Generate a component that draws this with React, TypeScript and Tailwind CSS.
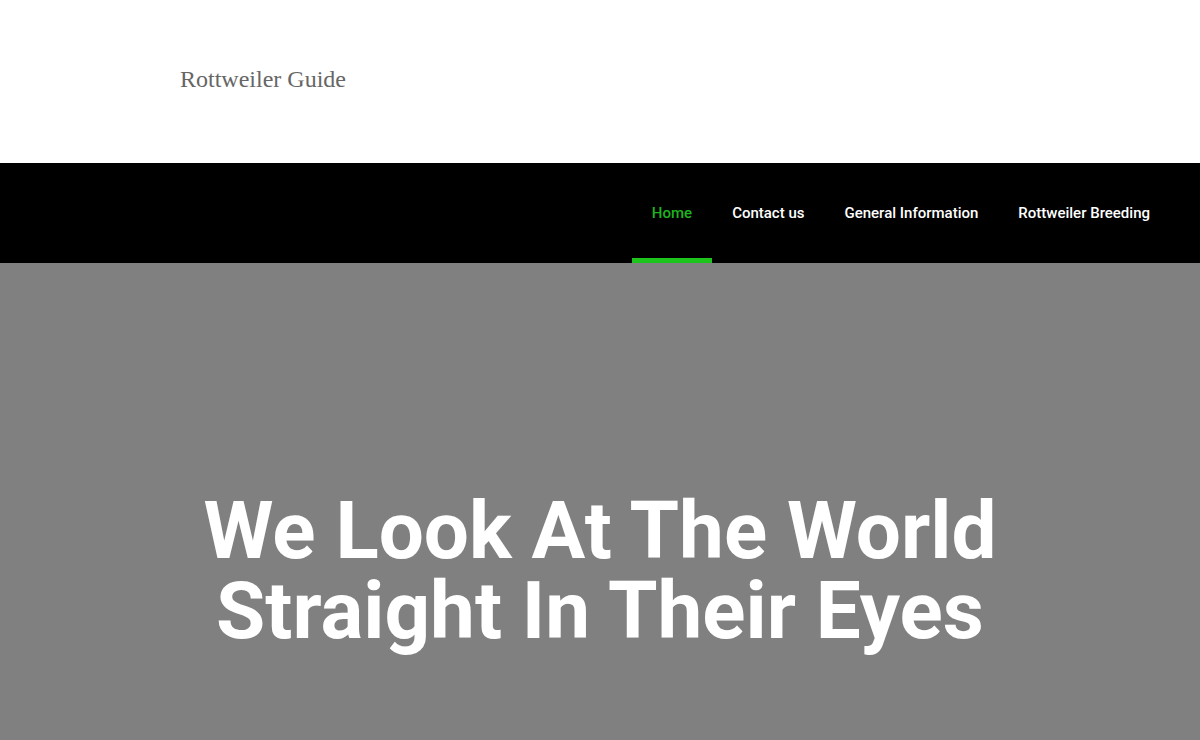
const NAV = ["Home", "Contact us", "General Information", "Rottweiler Breeding"];

export default function App() {
  return (
    <div className="min-h-screen bg-white font-['Roboto',sans-serif]">
      <header className="h-[163px] bg-white">
        <div className="pl-[180px] pt-[64px]">
          <a
            href="/"
            className="font-['Liberation_Serif',serif] text-[24px] leading-[30px] text-[#666666]"
          >
            Rottweiler Guide
          </a>
        </div>
      </header>

      <nav className="h-[100px] bg-black flex justify-end pr-[30px]">
        {NAV.map((item, i) => (
          <a
            key={item}
            href="#"
            className={
              i === 0
                ? "relative flex items-start pt-[40px] px-[20px] text-[15px] font-medium text-[#1fb51f]"
                : "relative flex items-start pt-[40px] px-[20px] text-[15px] font-medium text-white"
            }
          >
            <span className="leading-[20px]">{item}</span>
            {i === 0 && <span className="absolute left-0 right-0 bottom-0 h-[5px] bg-[#1cc41c]" />}
          </a>
        ))}
      </nav>

      <section className="h-[477px] bg-[#808080] flex flex-col items-center pt-[228px]">
        <h1 className="text-center text-[80px] leading-[80px] font-bold text-white">
          We Look At The World
          <br />
          Straight In Their Eyes
        </h1>
      </section>
    </div>
  );
}
